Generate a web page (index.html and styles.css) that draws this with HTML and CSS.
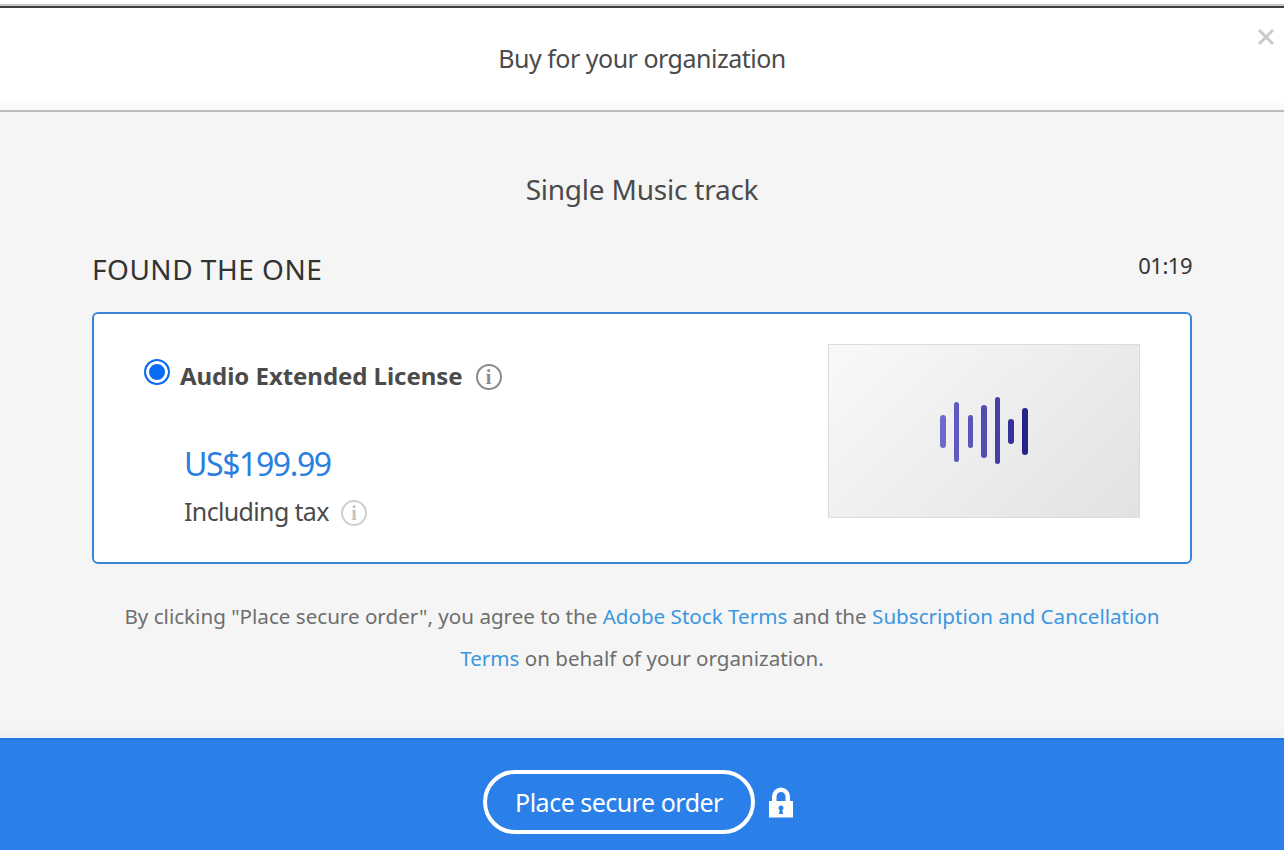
FILE: index.html
```html
<!DOCTYPE html>
<html lang="en">
<head>
    <meta charset="UTF-8">
    <meta name="viewport" content="width=device-width, initial-scale=1.0">
    <title>Buy for your organization</title>
    <link rel="stylesheet" href="styles.css">
</head>
<body>

    <div class="modal">
        <div class="modal-header">
            <h1>Buy for your organization</h1>
            <button class="close-btn" aria-label="Close">
                <svg width="18" height="18" viewBox="0 0 18 18"><path d="M2 2 L16 16 M16 2 L2 16" stroke="#c9c9c9" stroke-width="3" fill="none"/></svg>
            </button>
        </div>

        <div class="modal-body">
            <h2>Single Music track</h2>

            <div class="track-row">
                <span class="track-name">FOUND THE ONE</span>
                <span class="track-time">01:19</span>
            </div>

            <div class="license-card">
                <div class="license-info">
                    <div class="license-title">
                        <span class="radio"></span>
                        <span class="license-name">Audio Extended License</span>
                        <span class="info info-dark">i</span>
                    </div>
                    <div class="price">US$199.99</div>
                    <div class="tax">
                        <span>Including tax</span>
                        <span class="info info-light">i</span>
                    </div>
                </div>
                <div class="thumb">
                    <svg width="88" height="68" viewBox="0 0 88 68">
                        <rect x="0" y="18" width="6" height="33" rx="3" fill="#6e69c8"/>
                        <rect x="14" y="5" width="5" height="60" rx="2.5" fill="#5f5ac0"/>
                        <rect x="28" y="18" width="5" height="33" rx="2.5" fill="#5a55b8"/>
                        <rect x="41" y="8" width="6" height="53" rx="3" fill="#514cb0"/>
                        <rect x="55" y="0" width="5" height="67" rx="2.5" fill="#4440a6"/>
                        <rect x="68" y="22" width="6" height="25" rx="3" fill="#35309a"/>
                        <rect x="82" y="11" width="6" height="47" rx="3" fill="#27238c"/>
                    </svg>
                </div>
            </div>

            <p class="terms">By clicking "Place secure order", you agree to the <a href="#">Adobe Stock Terms</a> and the <a href="#">Subscription and Cancellation</a> <a href="#">Terms</a> on behalf of your organization.</p>
        </div>

        <div class="modal-footer">
            <button class="order-btn">Place secure order</button>
            <svg class="lock" width="26" height="32" viewBox="0 0 26 32">
                <path fill="#fff" fill-rule="evenodd" d="M1 14h3V9.500a9 9 0 0 1 18 0V14h3v16.500H1z M8.500 14h9V9.500a4.500 4.500 0 0 0-9 0z M13 18.500a2.500 2.500 0 0 0-1.400 4.600L11 27h4l-.6-3.900A2.500 2.500 0 0 0 13 18.500z"/>
            </svg>
        </div>
    </div>

</body>
</html>
```
FILE: styles.css
```css
* { margin: 0; padding: 0; box-sizing: border-box; font-family: 'Noto Sans', sans-serif; }
body { background: #fff; height: 850px; overflow: hidden; color: #4b4b4b; }

.modal { height: 850px; display: flex; flex-direction: column; padding-top: 4px; }

.modal-header {
    height: 108px; flex: none; position: relative;
    display: flex; justify-content: center; align-items: center;
    border-top: 2px solid #c8c8c8;
    border-bottom: 2px solid #bdbdbd;
    background: linear-gradient(#3f3f3f 0, #3f3f3f 2px, #fff 2px, #fff 88%, #f8f8f8 100%);
}
.modal-header h1 { font-size: 25px; font-weight: 400; letter-spacing: -0.5px; }
.close-btn {
    position: absolute; top: 22px; right: 9px;
    width: 18px; height: 18px; border: none; background: none; cursor: pointer;
}

.modal-body {
    flex: 1; padding: 0 92px; text-align: center;
    background: linear-gradient(#f5f5f5 calc(100% - 14px), #efefef);
}
.modal-body h2 { font-size: 28px; font-weight: 400; letter-spacing: -0.22px; margin-top: 57px; line-height: 40px; }

.track-row { display: flex; justify-content: space-between; align-items: flex-start; margin-top: 40px; color: #333; }
.track-name { font-size: 28px; line-height: 40px; letter-spacing: 0.5px; }
.track-time { font-size: 22px; line-height: 32px; letter-spacing: -0.5px; }

.license-card {
    height: 252px; margin-top: 23px; padding: 30px 50px 0;
    display: flex; justify-content: space-between; align-items: flex-start;
    background: #fff; border: 2px solid #3a86d8; border-radius: 6px; text-align: left;
}
.license-title { display: flex; align-items: center; height: 30px; margin-top: 16px; }
.radio {
    width: 26px; height: 26px; border-radius: 50%; background: #0a6cf5;
    border: 2px solid #0a6cf5; box-shadow: inset 0 0 0 3px #fff; margin-right: 10px; margin-top: -7px;
}
.license-name { font-size: 24px; font-weight: 700; letter-spacing: -0.05px; }
.info {
    width: 26px; height: 26px; border-radius: 50%; display: inline-flex; justify-content: center; align-items: center;
    font-family: 'Liberation Serif', serif; font-size: 20px; font-weight: 700;
}
.info-dark { border: 2px solid #8a8a8a; color: #8a8a8a; margin: 4px 0 0 13px; }
.info-light { border: 2px solid #cfcfcf; color: #c4c4c4; margin: 3px 0 0 12px; }
.price { font-size: 32px; line-height: 44px; color: #2a7fe0; letter-spacing: -1.4px; margin: 52px 0 0 40px; }
.tax { display: flex; align-items: center; font-size: 25px; line-height: 40px; letter-spacing: -0.65px; margin: 5px 0 0 40px; }

.thumb {
    width: 312px; height: 174px; display: flex; justify-content: center; align-items: center;
    background: linear-gradient(135deg, #f9f9f9, #e2e2e2);
    border: 1px solid #dcdcdc;
}

.terms { font-size: 20.6px; line-height: 42px; color: #6e6e6e; margin-top: 31px; padding: 0 20px; }
.terms a { color: #3a97e0; text-decoration: none; }

.modal-footer {
    height: 112px; flex: none; background: #2a80e8; border-top: 2px solid #2078e6;
    display: flex; justify-content: center; align-items: center; gap: 13px;
    padding: 14px 7px 0 0;
}
.order-btn {
    width: 272px; height: 64px; border: 4px solid #fff; border-radius: 32px; background: none;
    color: #fff; font-size: 25px; letter-spacing: -0.5px; cursor: pointer;
}
.lock { margin-top: 2px; }
```
